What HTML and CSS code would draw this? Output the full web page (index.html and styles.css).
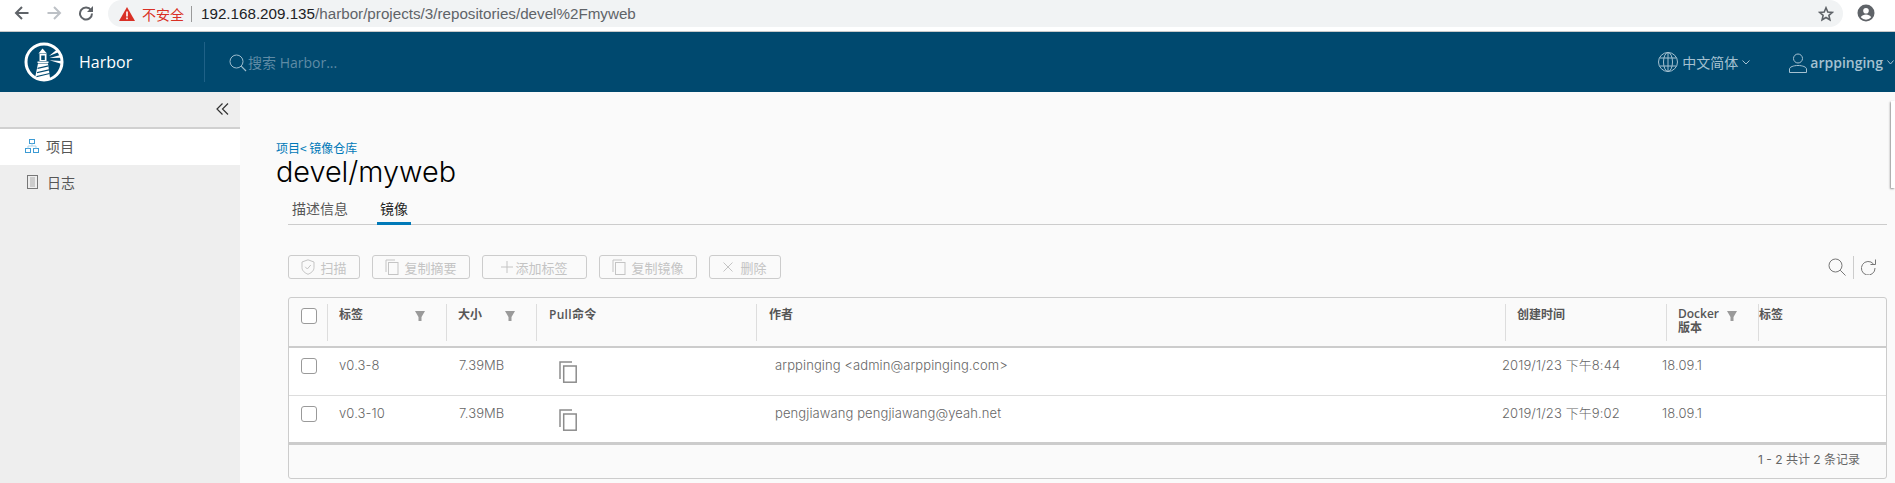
FILE: index.html
```html
<!DOCTYPE html>
<html lang="zh">
<head>
<meta charset="utf-8">
<title>Harbor</title>
<link rel="stylesheet" href="styles.css">
</head>
<body>
<div class="browser">
  <svg class="nav nav-back" width="18" height="16" viewBox="0 0 18 16"><path d="M15.500 8H3M9 2 3 8l6 6" fill="none" stroke="#5f6368" stroke-width="2"/></svg>
  <svg class="nav nav-fwd" width="18" height="16" viewBox="0 0 18 16"><path d="M2.500 8H15M9 2l6 6-6 6" fill="none" stroke="#bdc1c6" stroke-width="2"/></svg>
  <svg class="nav nav-reload" width="16" height="16" viewBox="0 0 16 16"><path d="M13 5.200A6 6 0 1 0 14 8.500" fill="none" stroke="#5f6368" stroke-width="2"/><path d="M15 1v6H9z" fill="#5f6368"/></svg>
  <div class="omnibox">
    <svg class="warn" width="16" height="14" viewBox="0 0 16 14"><path d="M8 0 16 14H0z" fill="#d93025"/><path d="M7.200 4.500h1.600v5H7.200zM7.200 10.500h1.600v1.800H7.200z" fill="#fff"/></svg>
    <span class="insecure">不安全</span>
    <span class="omni-sep"></span>
    <span class="url"><span class="url-host">192.168.209.135</span>/harbor/projects/3/repositories/devel%2Fmyweb</span>
    <svg class="star" width="16" height="16" viewBox="0 0 16 16"><path d="M8 1.800l1.800 4.200 4.500.4-3.400 3 1 4.400L8 11.500l-3.900 2.300 1-4.400-3.400-3 4.500-.4z" fill="none" stroke="#5f6368" stroke-width="1.600"/></svg>
  </div>
  <svg class="account" width="18" height="18" viewBox="0 0 18 18"><circle cx="9" cy="9" r="8.500" fill="#5f6368"/><circle cx="9" cy="6.800" r="2.800" fill="#fff"/><path d="M3.800 13.300c1-2 3.200-2.800 5.200-2.800s4.200.8 5.200 2.800A6.700 6.700 0 0 1 9 15.800a6.700 6.700 0 0 1-5.200-2.500z" fill="#fff"/></svg>
</div>

<header class="topbar">
  <div class="brand">
    <svg class="logo" width="40" height="40" viewBox="0 0 40 40">
      <circle cx="20" cy="20" r="18" fill="none" stroke="#fff" stroke-width="3"/>
      <path d="M14.500 11.500 18.500 6.500 23 11.500z" fill="#fff"/>
      <path d="M15.500 12h7v7h-7z" fill="#fff"/>
      <path d="M17.200 13.500h3.600V18h-3.600z" fill="#00496f"/>
      <path d="M13.500 19.500h11V21h-11z" fill="#fff"/>
      <path d="M14 21.500h10L26 36l-7 2-8-2z" fill="#fff"/>
      <path d="M13.600 25.800 24.400 23.300l.1 1.100-11 2.500zM13.100 30 25 27.300l.1 1.100-12.100 2.800zM12.600 34 25.600 31l.1 1.100L12.400 35.200z" fill="#00496f"/>
      <path d="M25 14 33 7.500 35 10zM25.500 16 36.500 13 37.300 15.800zM25.500 18.200 37.500 19 37 21.800z" fill="#fff"/>
    </svg>
    <span class="brand-name">Harbor</span>
  </div>
  <div class="search">
    <svg width="18" height="18" viewBox="0 0 18 18"><circle cx="7.500" cy="7.500" r="6.500" fill="none" stroke="#9dbccd" stroke-width="1"/><path d="M12.200 12.200 17 17" stroke="#9dbccd" stroke-width="1.200"/></svg>
    <span class="search-text">搜索 Harbor...</span>
  </div>
  <div class="top-right">
    <svg class="globe" width="20" height="20" viewBox="0 0 20 20" fill="none" stroke="#a5c1d1" stroke-width="1"><circle cx="10" cy="10" r="9.500"/><ellipse cx="10" cy="10" rx="4.500" ry="9.500"/><path d="M10 .5v19M1.500 6h17M1.500 14h17"/></svg>
    <span class="lang">中文简体</span>
    <svg class="chev chev-lang" width="8" height="5" viewBox="0 0 8 5"><path d="M.5.500 4 4 7.500.5" fill="none" stroke="#a5c1d1"/></svg>
    <svg class="user-icon" width="18" height="20" viewBox="0 0 18 20" fill="none" stroke="#a5c1d1" stroke-width="1"><circle cx="9" cy="5.500" r="4.500"/><path d="M.5 19.500v-3.500c0-2 4-3.500 8.500-3.500s8.500 1.500 8.500 3.500v3.500z"/></svg>
    <span class="user">arppinging</span>
    <svg class="chev" width="7" height="5" viewBox="0 0 7 5"><path d="M.5.500 3.500 4 6.500.5" fill="none" stroke="#a5c1d1"/></svg>
  </div>
</header>

<div class="layout">
  <aside class="sidebar">
    <div class="collapse">
      <svg width="13" height="12" viewBox="0 0 13 12"><path d="M6.500.5 1 6l5.500 5.500M12 .5 6.500 6 12 11.500" fill="none" stroke="#333" stroke-width="1.200"/></svg>
    </div>
    <a class="side-item side-active">
      <svg width="14" height="14" viewBox="0 0 14 14" fill="none" stroke="#3d9bd4" stroke-width="1"><rect x="4.500" y=".5" width="5" height="4"/><rect x=".5" y="9.500" width="5" height="4"/><rect x="8.500" y="9.500" width="5" height="4"/><path d="M7 4.500V7M3 9.500V7h8v2.500" stroke="#a9d2ea"/></svg>
      <span>项目</span>
    </a>
    <a class="side-item">
      <svg class="log-icon" width="12" height="14" viewBox="0 0 12 14" fill="none" stroke="#777" stroke-width="1"><rect x=".5" y=".5" width="10" height="13"/><path d="M3 3h5M3 5h5M3 7h5M3 9h5M3 11h5" stroke="#aaa"/></svg>
      <span>日志</span>
    </a>
  </aside>

  <main class="content">
    <div class="crumb">项目&lt; 镜像仓库</div>
    <h1 class="title">devel/myweb</h1>
    <nav class="tabs">
      <span class="tab">描述信息</span>
      <span class="tab tab-active">镜像</span>
    </nav>

    <div class="toolbar">
      <div class="actions">
        <button class="btn btn-scan"><svg width="14" height="16" viewBox="0 0 14 16" fill="none" stroke="#c4c4c4"><path d="M7 .8 13 3v5.500c0 3.500-3 5.500-6 6.800-3-1.300-6-3.300-6-6.800V3z"/><path d="M4.200 7.800 6.300 10l3.500-4"/></svg>扫描</button>
        <button class="btn btn-digest"><svg class="copy-s" width="14" height="16" viewBox="0 0 14 16" fill="none" stroke="#c4c4c4"><path d="M1 13V1h9"/><rect x="3.500" y="3.500" width="9.500" height="12"/></svg>复制摘要</button>
        <button class="btn btn-label"><svg width="12" height="12" viewBox="0 0 12 12" stroke="#c4c4c4"><path d="M6 0v12M0 6h12"/></svg>添加标签</button>
        <button class="btn btn-image"><svg class="copy-s" width="14" height="16" viewBox="0 0 14 16" fill="none" stroke="#c4c4c4"><path d="M1 13V1h9"/><rect x="3.500" y="3.500" width="9.500" height="12"/></svg>复制镜像</button>
        <button class="btn btn-del"><svg class="x-s" width="10" height="10" viewBox="0 0 10 10" stroke="#c4c4c4"><path d="M.5.500l9 9M9.500.5l-9 9"/></svg>删除</button>
      </div>
      <div class="tools">
        <svg width="18" height="18" viewBox="0 0 18 18" fill="none" stroke="#777" stroke-width="1"><circle cx="7.500" cy="7.500" r="6.500"/><path d="M12.200 12.200 17.500 17.500"/></svg>
        <span class="tool-sep"></span>
        <svg width="15" height="16" viewBox="0 0 15 16" fill="none" stroke="#777" stroke-width="1"><path d="M12.500 5A6.800 6.800 0 1 0 14 9"/><path d="M14.500 .5v5h-5" /></svg>
      </div>
    </div>

    <section class="grid">
      <div class="grid-head">
        <div class="hc hc-check"><span class="checkbox"></span></div>
        <div class="hc hc-filter">标签<i class="filter"></i></div>
        <div class="hc hc-filter">大小<i class="filter"></i></div>
        <div class="hc hc-pull">Pull命令</div>
        <div class="hc hc-author">作者</div>
        <div class="hc">创建时间</div>
        <div class="hc hc-filter"><span class="docker">Docker<br>版本</span><i class="filter filter-docker"></i></div>
        <div class="hc hc-last">标签</div>
      </div>
      <div class="grid-row">
        <div class="dc dc-check"><span class="checkbox"></span></div>
        <div class="dc">v0.3-8</div>
        <div class="dc">7.39MB</div>
        <div class="dc dc-copy"><svg width="18" height="22" viewBox="0 0 18 22" fill="none" stroke="#8c8c8c" stroke-width="1.500"><path d="M1 18V1h12"/><rect x="4.700" y="5" width="12.500" height="16.200"/></svg></div>
        <div class="dc">arppinging &lt;admin@arppinging.com&gt;</div>
        <div class="dc">2019/1/23 下午8:44</div>
        <div class="dc">18.09.1</div>
        <div class="dc"></div>
      </div>
      <div class="grid-row grid-row-last">
        <div class="dc dc-check"><span class="checkbox"></span></div>
        <div class="dc">v0.3-10</div>
        <div class="dc">7.39MB</div>
        <div class="dc dc-copy"><svg width="18" height="22" viewBox="0 0 18 22" fill="none" stroke="#8c8c8c" stroke-width="1.500"><path d="M1 18V1h12"/><rect x="4.700" y="5" width="12.500" height="16.200"/></svg></div>
        <div class="dc">pengjiawang pengjiawang@yeah.net</div>
        <div class="dc">2019/1/23 下午9:02</div>
        <div class="dc">18.09.1</div>
        <div class="dc"></div>
      </div>
      <div class="grid-foot">1 - 2 共计 2 条记录</div>
    </section>
  </main>
  <div class="overlay-scroll"></div>
</div>
</body>
</html>
```

FILE: styles.css
```css
* { box-sizing: border-box; }
html, body { margin: 0; height: 483px; overflow: hidden; }
body { font-family: "Inter", "Noto Sans CJK SC", sans-serif; font-size: 12px; color: #565656; background: #fafafa; }

.browser { height: 32px; background: #fff; border-bottom: 1px solid #c8c8c8; display: flex; align-items: flex-start; padding-top: 5px; position: relative; }
.nav { flex: none; }
.nav-back { margin-left: 13px; }
.nav-fwd { margin-left: 14px; }
.nav-reload { margin-left: 15px; }
.omnibox { margin-left: 14px; margin-top: -5px; width: 1735px; height: 27px; background: #f1f3f4; border-radius: 14px; display: flex; align-items: center; padding-left: 11px; font-family: "Liberation Sans", "Noto Sans CJK SC", sans-serif; font-size: 14px; }
.warn { flex: none; }
.insecure { margin-left: 7px; color: #d93025; font-family: "Noto Sans CJK SC", sans-serif; }
.omni-sep { width: 1px; height: 16px; background: #9a9a9a; margin: 0 9px 0 7px; }
.url { color: #5f6368; font-size: 15.200px; white-space: nowrap; }
.url-host { color: #202124; }
.star { margin-left: auto; margin-right: 9px; }
.account { margin-left: 14px; margin-top: -1px; flex: none; }

.topbar { height: 60px; background: #00496f; display: flex; align-items: center; color: #fff; }
.brand { width: 205px; height: 40px; flex: none; display: flex; align-items: center; border-right: 1px solid #1f6187; padding-left: 24px; }
.brand-name { margin-left: 15px; font-size: 16px; font-family: "Open Sans", sans-serif; }
.search { margin-left: 24px; display: flex; align-items: center; gap: 1px; color: #5f8ba5; font-size: 14px; font-family: "Open Sans", "Noto Sans CJK SC", sans-serif; }
.search svg { margin-top: 1px; }
.top-right { margin-left: auto; display: flex; align-items: center; color: #a5c1d1; font-size: 14px; padding-right: 1px; }
.lang { margin-left: 4px; font-family: "Noto Sans CJK SC", sans-serif; }
.chev { margin-left: 4px; }
.chev-lang { margin-right: 39px; }
.user-icon { margin-top: 2px; }
.user { margin-left: 3px; font-weight: 600; font-family: "Open Sans", sans-serif; font-size: 14px; }

.layout { display: grid; grid-template-columns: 240px 1fr; height: 391px; position: relative; }
.sidebar { background: #eee; }
.collapse { height: 37px; border-bottom: 2px solid #d0d0d0; display: flex; justify-content: flex-end; align-items: center; padding: 0 11px 2px 0; }
.side-item { height: 36px; display: flex; align-items: center; padding: 0 0 2px 25px; gap: 7px; font-size: 14px; color: #565656; font-family: "Noto Sans CJK SC", sans-serif; }
.side-active { background: #fff; }
.log-icon { margin: 0 1px 0 2px; }

.content { padding: 48px 8px 0 36px; }
.crumb { color: #0079b8; font-size: 12px; line-height: 16px; height: 15px; font-family: "Noto Sans CJK SC", sans-serif; }
.title { margin: 0; font-family: "Inter", sans-serif; font-weight: 300; font-size: 28.800px; line-height: 34px; color: #000; height: 34px; }
.tabs { margin: 7px 0 0 12px; height: 29px; border-bottom: 1px solid #ccc; display: flex; gap: 29px; padding-left: 4px; font-size: 14px; font-family: "Noto Sans CJK SC", sans-serif; }
.tab { height: 29px; line-height: 24px; color: #565656; }
.tab-active { color: #222; border-bottom: 3px solid #0079b8; width: 34px; text-align: center; }

.toolbar { margin: 30px 0 0 12px; height: 24px; display: flex; justify-content: space-between; align-items: center; }
.actions { display: flex; gap: 12px; }
.btn { height: 24px; border: 1px solid #ccc; border-radius: 3px; background: transparent; color: #c4c4c4; font-size: 13px; font-family: "Noto Sans CJK SC", sans-serif; display: flex; align-items: center; padding: 0; justify-content: center; }
.btn-scan { width: 72px; gap: 5px; }
.btn-digest { width: 98px; gap: 5px; }
.btn-label { width: 105px; gap: 2px; }
.btn-image { width: 98px; gap: 5px; }
.btn-del { width: 72px; gap: 7px; }
.tools { display: flex; align-items: center; gap: 7px; padding-right: 11px; }
.tool-sep { width: 1px; height: 23px; background: #ccc; }

.grid { margin: 18px 0 0 12px; height: 182px; border: 1px solid #ccc; border-radius: 3px; display: flex; flex-direction: column; overflow: hidden; }
.grid-head { height: 50px; border-bottom: 2px solid #ccc; display: grid; grid-template-columns: 38px 119px 90px 220px 749px 161px 92px 1fr; padding-top: 6px; font-weight: 600; }
.hc { height: 37px; border-left: 1px solid #ddd; padding: 3px 0 0 11px; line-height: 15px; font-family: "Open Sans", "Noto Sans CJK SC", sans-serif; }
.hc-check { border-left: 0; padding: 4px 0 0 12px; }
.hc-pull { padding-left: 12px; letter-spacing: .3px; }
.hc-author { padding-left: 12px; }
.hc-last { padding-left: 0; }
.hc-filter { display: flex; justify-content: space-between; padding-right: 21px; }
.docker { line-height: 14px; }
.filter { width: 10px; height: 10px; margin-top: 4px; background: #9a9a9a; clip-path: polygon(0 0, 100% 0, 65% 60%, 65% 100%, 35% 100%, 35% 60%); flex: none; }
.filter-docker { margin-right: 0; }
.checkbox { display: block; width: 16px; height: 16px; border: 1px solid #9a9a9a; border-radius: 3px; background: #fff; }

.grid-row { height: 48px; background: #fff; border-bottom: 1px solid #ddd; display: grid; grid-template-columns: 38px 120px 90px 226px 727px 160px 100px 1fr; font-size: 13px; color: #666; letter-spacing: .1px; }
.grid-row-last { height: 49px; border-bottom: 3px solid #ccc; }
.dc { padding: 9px 0 0 12px; line-height: 16px; white-space: nowrap; font-family: "Inter", "Noto Sans CJK SC", sans-serif; font-weight: 300; }
.dc-check { padding: 10px 0 0 12px; }
.dc-copy { padding: 13px 0 0 22px; }
.grid-foot { flex: 1; text-align: right; padding: 6px 26px 0 0; line-height: 18px; color: #666; }

.overlay-scroll { position: absolute; top: 9px; right: 0; width: 4px; height: 87px; background: #fff; box-shadow: -1px 1px 2px rgba(0,0,0,.4); }
```
